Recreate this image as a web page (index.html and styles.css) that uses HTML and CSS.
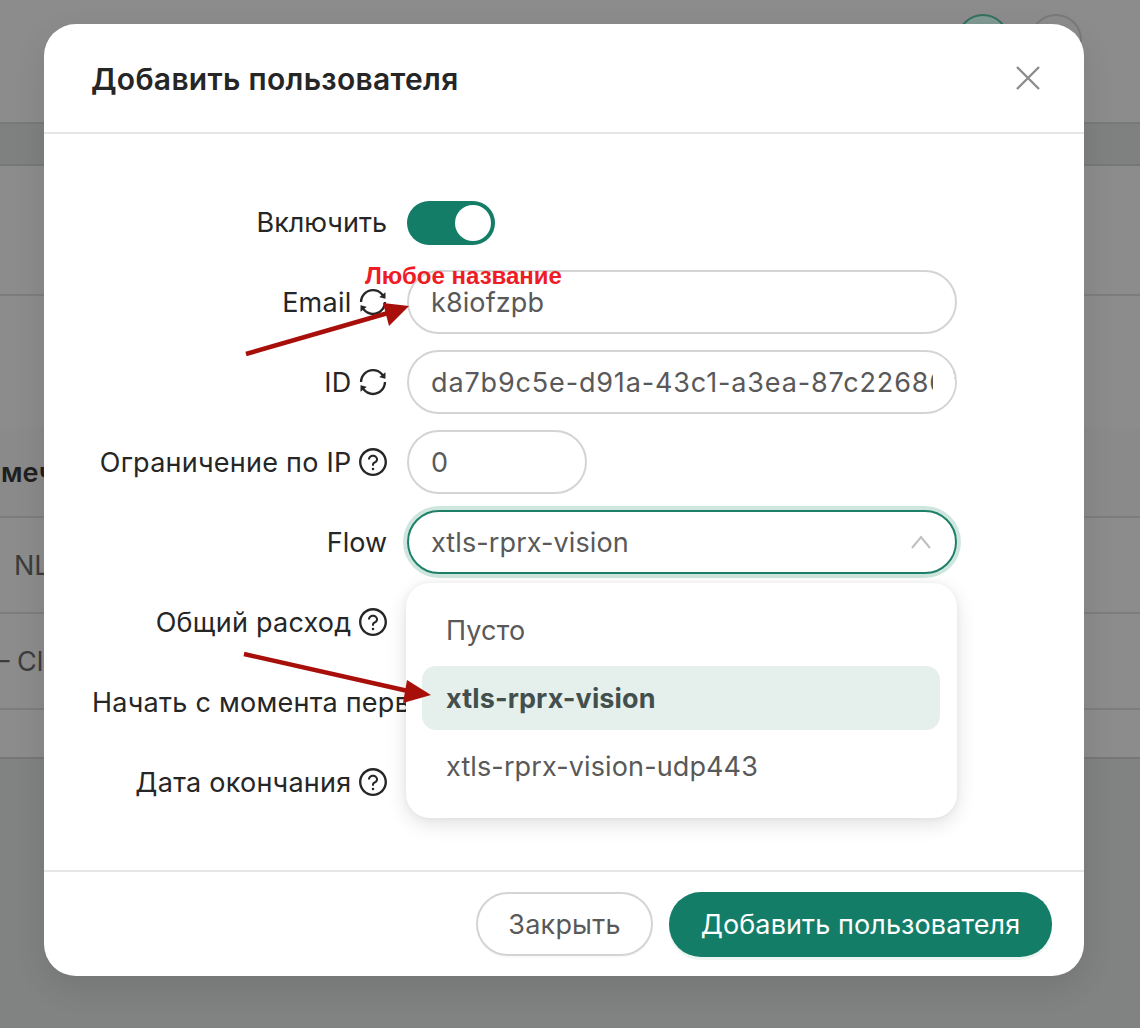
FILE: index.html
```html
<!DOCTYPE html>
<html lang="ru">
<head>
<meta charset="utf-8">
<title>Добавить пользователя</title>
<link rel="stylesheet" href="styles.css">
</head>
<body>
<svg width="0" height="0" class="defs">
  <symbol id="i-sync" viewBox="0 0 1024 1024"><path d="M168 504.2c1-43.7 10-86.1 26.9-126 17.3-41 42.1-77.7 73.7-109.4S337 212.3 378 195c42.4-17.9 87.4-27 133.9-27s91.5 9.1 133.8 27A341.5 341.5 0 0 1 755 268.8c9.9 9.9 19.2 20.4 27.8 31.4l-60.2 47a8 8 0 0 0 3 14.1l175.7 43c5 1.2 9.9-2.6 9.9-7.7l.8-180.9c0-6.7-7.7-10.5-12.9-6.3l-56.4 44.1C765.8 155.1 646.2 92 511.8 92 282.7 92 96.3 275.6 92 503.8a8 8 0 0 0 8 8.2h60c4.4 0 7.9-3.5 8-7.8zm756 7.8h-60c-4.4 0-7.9 3.5-8 7.8-1 43.7-10 86.1-26.9 126-17.3 41-42.1 77.8-73.7 109.4A342.45 342.45 0 0 1 512.1 856a342.24 342.24 0 0 1-243.2-100.8c-9.9-9.9-19.2-20.4-27.8-31.4l60.2-47a8 8 0 0 0-3-14.1l-175.7-43c-5-1.2-9.9 2.6-9.9 7.7l-.7 181c0 6.7 7.7 10.5 12.9 6.3l56.4-44.1C258.2 868.9 377.8 932 512.2 932c229.2 0 415.5-183.7 419.8-411.8a8 8 0 0 0-8-8.2z"/></symbol>
  <symbol id="i-help" viewBox="0 0 1024 1024"><path d="M512 64C264.6 64 64 264.6 64 512s200.6 448 448 448 448-200.6 448-448S759.4 64 512 64zm0 820c-205.4 0-372-166.6-372-372s166.6-372 372-372 372 166.6 372 372-166.6 372-372 372z"/><path d="M623.6 316.7C593.6 290.4 554 276 512 276s-81.6 14.5-111.6 40.7C369.2 344 352 380.7 352 420v7.6c0 4.4 3.6 8 8 8h48c4.4 0 8-3.6 8-8V420c0-44.1 43.1-80 96-80s96 35.9 96 80c0 31.1-22 59.6-56.1 72.7-21.2 8.1-39.2 22.3-52.1 40.9-13.1 19-19.9 41.8-19.9 65.1V620c0 4.4 3.6 8 8 8h48c4.4 0 8-3.6 8-8v-21.3c0-18.1 13.4-32.6 29.8-38.9 35.3-13.6 58.1-37.3 74.7-57.1 16.3-19.4 24.9-42.7 24.9-67.7 0-39.3-17.2-76-48.4-103.3z"/><path d="M472 732a40 40 0 1 0 80 0 40 40 0 1 0-80 0z"/></symbol>
</svg>

<div class="page">
  <div class="page-top">
    <span class="circle circle--teal"></span>
    <span class="circle circle--gray"></span>
  </div>
  <div class="band band--tabs"></div>
  <div class="band band--a"></div>
  <div class="band band--b"></div>
  <div class="band band--head"><span class="cell-head">мечание</span></div>
  <div class="band band--row"><span class="cell cell--nl">NL</span></div>
  <div class="band band--row"><span class="cell cell--cl">– Cl</span></div>
  <div class="band band--c"></div>
  <div class="band band--foot"></div>
</div>

<div class="modal">
  <header class="modal-head">
    <h1 class="modal-title">Добавить пользователя</h1>
    <svg class="close" viewBox="0 0 24 24"><path d="M1 1 23 23M23 1 1 23"/></svg>
  </header>

  <div class="modal-body">
    <div class="row">
      <div class="label label--tight">Включить</div>
      <div class="switch"><span class="knob"></span></div>
    </div>
    <div class="row">
      <div class="label">Email <svg class="ico"><use href="#i-sync"/></svg></div>
      <div class="field">k8iofzpb</div>
    </div>
    <div class="row">
      <div class="label">ID <svg class="ico"><use href="#i-sync"/></svg></div>
      <div class="field field--clip">da7b9c5e-d91a-43c1-a3ea-87c22686f0b1</div>
    </div>
    <div class="row">
      <div class="label">Ограничение по IP <svg class="ico"><use href="#i-help"/></svg></div>
      <div class="field field--short">0</div>
    </div>
    <div class="row">
      <div class="label label--tight">Flow</div>
      <div class="field field--focus">xtls-rprx-vision
        <svg class="chev" viewBox="0 0 20 14"><path d="M1 13 10 2l9 11"/></svg>
      </div>
    </div>
    <div class="row">
      <div class="label">Общий расход <svg class="ico"><use href="#i-help"/></svg></div>
      <div class="field field--short"></div>
    </div>
    <div class="row">
      <div class="label label--long">Начать с момента первого подключения</div>
      <div class="switch switch--off"><span class="knob"></span></div>
    </div>
    <div class="row">
      <div class="label">Дата окончания <svg class="ico"><use href="#i-help"/></svg></div>
      <div class="field"></div>
    </div>

    <div class="menu">
      <div class="menu-item">Пусто</div>
      <div class="menu-item menu-item--active">xtls-rprx-vision</div>
      <div class="menu-item">xtls-rprx-vision-udp443</div>
    </div>
  </div>

  <footer class="modal-foot">
    <button class="btn">Закрыть</button>
    <button class="btn btn--primary">Добавить пользователя</button>
  </footer>
</div>

<div class="note">Любое название</div>
<svg class="arrows" viewBox="0 0 1140 1028">
  <path d="M246 354 388 313"/>
  <polygon points="409,306 383,303 389,326"/>
  <path d="M244 654 408 691"/>
  <polygon points="431,695 407,680 403,703"/>
</svg>
</body>
</html>
```
FILE: styles.css
```css
* { box-sizing: border-box; }
html, body { margin: 0; height: 100%; }
body {
  position: relative;
  width: 1140px;
  height: 1028px;
  overflow: hidden;
  font-family: Inter, "Noto Sans", sans-serif;
  background: #8c8c8c;
}
.defs { position: absolute; }

/* dimmed page behind the dialog */
.page { display: flex; flex-direction: column; height: 1028px; }
.page-top {
  height: 122px;
  display: flex;
  justify-content: flex-end;
  gap: 21px;
  padding: 14px 58px 0 0;
  background: #8c8c8c;
}
.circle { width: 52px; height: 52px; border-radius: 50%; border: 2px solid #7f7f7f; }
.circle--teal { background: #7f9a92; border-color: #33705f; }
.circle--gray { background: #8c8c8c; border-color: #797979; }
.band { display: flex; align-items: center; flex: none; border-bottom: 2px solid #7d7d7d; background: #8c8c8c; font-size: 27px; overflow: hidden; white-space: nowrap; }
.band--tabs { height: 44px; background: #7f8181; border-top: 2px solid #787a7a; border-bottom-color: #767878; }
.band--a { height: 130px; }
.band--b { height: 132px; border-bottom: 0; }
.band--head { height: 90px; background: #8a8a8a; }
.band--row { height: 96px; }
.band--c { height: 49px; border-bottom: 2px solid #767878; }
.band--foot { flex: 1; background: #818383; border-bottom: 0; }
.cell-head { font-weight: 600; color: #1f1f1f; padding: 0 0 0 1px; }
.cell { color: #3c3c3c; }
.cell--nl { padding-left: 14px; }
.cell--cl { margin-left: -4px; }

/* dialog */
.modal {
  position: absolute;
  left: 44px;
  top: 24px;
  width: 1040px;
  height: 952px;
  display: flex;
  flex-direction: column;
  background: #fff;
  border-radius: 32px;
  box-shadow: 0 12px 32px rgba(0, 0, 0, .10);
  color: #262626;
}
.modal-head {
  height: 110px;
  padding: 2px 44px 0 47px;
  display: flex;
  align-items: center;
  justify-content: space-between;
  border-bottom: 2px solid #e6e6e6;
}
.modal-title { margin: 0; font-size: 30px; font-weight: 600; letter-spacing: .3px; color: #262626; }
.close { width: 24px; height: 24px; fill: none; stroke: #8c8c8c; stroke-width: 2.4; margin-top: -2px; }

.modal-body { position: relative; flex: 1; padding: 56px 0 0; }
.row { display: flex; align-items: center; height: 64px; margin-bottom: 16px; padding-left: 48px; }
.label {
  width: 295px;
  margin-right: 20px;
  flex: none;
  display: flex;
  justify-content: flex-end;
  align-items: center;
  gap: 5px;
  font-size: 27px;
  letter-spacing: .25px;
  white-space: nowrap;
  color: #262626;
}
.label--tight { letter-spacing: 0; }
.label--long { display: block; width: 315px; margin-right: 0; overflow: hidden; }
.ico { width: 32px; height: 32px; margin-right: -1.5px; fill: #262626; flex: none; }

.switch {
  position: relative;
  width: 88px;
  height: 44px;
  margin-top: 2px;
  border-radius: 22px;
  background: #147d67;
}
.knob { position: absolute; right: 4px; top: 4px; width: 36px; height: 36px; border-radius: 50%; background: #fff; }
.switch--off { background: #bfbfbf; }
.switch--off .knob { right: auto; left: 4px; }

.field {
  position: relative;
  width: 550px;
  height: 64px;
  padding: 0 22px;
  display: flex;
  align-items: center;
  border: 2px solid #d4d4d4;
  border-radius: 32px;
  font-size: 27px;
  letter-spacing: .1px;
  color: #595959;
  background: #fff;
  white-space: nowrap;
  overflow: hidden;
}
.field--short { width: 180px; }
.field--clip { padding-right: 0; letter-spacing: .85px; }
.field--clip::after { content: ""; position: absolute; right: 0; top: 0; bottom: 0; width: 22px; background: #fff; }
.field--focus { border-color: #1f8069; box-shadow: 0 0 0 4px #cfe6df; overflow: visible; justify-content: space-between; }
.chev { width: 20px; height: 14px; fill: none; stroke: #bfbfbf; stroke-width: 2; margin-right: 2px; }

.menu {
  position: absolute;
  left: 362px;
  top: 449px;
  width: 551px;
  height: 235px;
  padding: 15px 17px 15px 16px;
  background: #fff;
  border-radius: 24px;
  box-shadow: 0 6px 20px rgba(0, 0, 0, .12), 0 0 6px rgba(0, 0, 0, .05);
  display: flex;
  flex-direction: column;
  gap: 4px;
}
.menu-item {
  height: 64px;
  padding: 0 24px;
  display: flex;
  align-items: center;
  border-radius: 14px;
  font-size: 27px;
  letter-spacing: .12px;
  color: #595959;
}
.menu-item--active { background: #e5f0ed; color: #434f4c; font-weight: 700; }

.modal-foot {
  height: 106px;
  padding: 20px 32px 0 0;
  display: flex;
  justify-content: flex-end;
  align-items: flex-start;
  gap: 16px;
  border-top: 2px solid #e6e6e6;
}
.btn {
  height: 64px;
  width: 177px;
  border: 2px solid #d4d4d4;
  border-radius: 32px;
  background: #fff;
  color: #595959;
  font: inherit;
  font-size: 27px;
  letter-spacing: .2px;
  box-shadow: 0 2px 0 rgba(0, 0, 0, .02);
}
.btn--primary { width: 383px; height: 65px; border: 0; background: #147d67; color: #fff; letter-spacing: .1px; box-shadow: 0 3px 0 rgba(20, 125, 103, .08); }

/* annotations drawn on top of the screenshot */
.note {
  position: absolute;
  left: 365px;
  top: 262px;
  font: 700 24px/28px "Liberation Sans", Arial, sans-serif;
  color: #ee1c25;
  white-space: nowrap;
}
.arrows { position: absolute; left: 0; top: 0; width: 1140px; height: 1028px; pointer-events: none; }
.arrows path { stroke: #a80f0b; stroke-width: 4.5; fill: none; }
.arrows polygon { fill: #a80f0b; }
```
